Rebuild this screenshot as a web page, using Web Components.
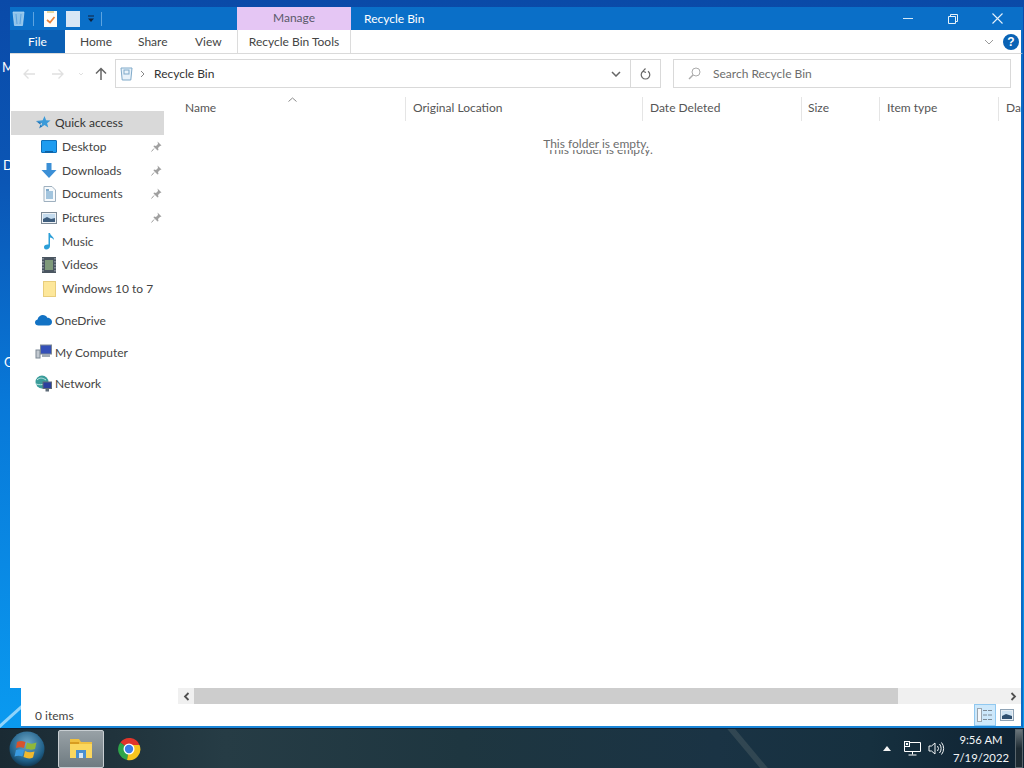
<!DOCTYPE html>
<html>
<head>
<meta charset="utf-8">
<title>Recycle Bin</title>
<style>
  html, body { margin: 0; padding: 0; width: 1024px; height: 768px; overflow: hidden; }
  body { font: 12px Lato, "Open Sans", sans-serif; color: #444; }
</style>
</head>
<body>
<win-desktop>
  <explorer-window>
    <title-bar slot="top"></title-bar>
    <ribbon-tabs slot="top"></ribbon-tabs>
    <address-row slot="top"></address-row>
    <nav-pane slot="left">
      <nav-item top selected label="Quick access" icon="star"></nav-item>
      <nav-item label="Desktop" icon="desktop" pinned></nav-item>
      <nav-item label="Downloads" icon="downloads" pinned></nav-item>
      <nav-item label="Documents" icon="documents" pinned></nav-item>
      <nav-item label="Pictures" icon="pictures" pinned></nav-item>
      <nav-item label="Music" icon="music"></nav-item>
      <nav-item label="Videos" icon="videos"></nav-item>
      <nav-item label="Windows 10 to 7" icon="folder"></nav-item>
      <nav-item top gap label="OneDrive" icon="onedrive"></nav-item>
      <nav-item top gap label="My Computer" icon="computer"></nav-item>
      <nav-item top gap label="Network" icon="network"></nav-item>
    </nav-pane>
    <file-list slot="main"></file-list>
    <h-scrollbar slot="scroll"></h-scrollbar>
    <status-bar slot="status"></status-bar>
  </explorer-window>
  <task-bar slot="bar"></task-bar>
</win-desktop>

<script>
const ICONS = {
  star: `<svg width="16" height="16" viewBox="0 0 16 16"><path d="M9.500 1l1.600 4.200 4.400.2-3.400 2.800 1.200 4.400-3.800-2.500-3.700 2.500L7 8.200 1 6l6.700-.7z" fill="#3a9ad9"/><path d="M1 6l5 1.500-1.800 6 3-2.300" fill="#2277bb"/></svg>`,
  desktop: `<svg width="16" height="14" viewBox="0 0 16 14"><rect x=".5" y=".5" width="15" height="12" rx=".5" fill="#1e9cf0" stroke="#0f6fb8"/><rect x="4" y="11" width="8" height="1.500" fill="#0f5f9f"/></svg>`,
  downloads: `<svg width="16" height="17" viewBox="0 0 16 17"><path d="M5.500 1h5v7H15.500L8 16 .5 8H5.500z" fill="#3b8fd6"/></svg>`,
  documents: `<svg width="13" height="16" viewBox="0 0 13 16"><path d="M1 .5h8l3.500 3.500v11.500H1z" fill="#f7fafc" stroke="#9fb0bf"/><path d="M3 6h7M3 8h7M3 10h7M3 12h7" stroke="#4f8fc0"/><rect x="3" y="3" width="3" height="2" fill="#7fa9c9"/></svg>`,
  pictures: `<svg width="16" height="12" viewBox="0 0 16 12"><rect x=".5" y=".5" width="15" height="11" fill="#eef2f6" stroke="#7d8a96"/><rect x="2" y="2" width="12" height="8" fill="#c4dbee"/><path d="M2 7l4-2 4 2 4-1v4H2z" fill="#3e5d7d"/></svg>`,
  music: `<svg width="12" height="18" viewBox="0 0 12 18"><path d="M5.500 1h1.500c.3 3 4 3.500 4 7-1-1.500-2.500-2.300-4-2.500V14c0 2-1.800 3.500-3.800 3.500C1.500 17.500 1 16 1 15c0-1.800 2-3 4.500-2.500z" fill="#2c9fd8"/></svg>`,
  videos: `<svg width="14" height="16" viewBox="0 0 14 16"><rect width="14" height="16" fill="#4a5560"/><rect x="3" y="3" width="8" height="10" fill="#7f9a7a"/><path d="M1 1v14M13 1v14" stroke="#b6bec6" stroke-dasharray="1.500 1.500"/></svg>`,
  folder: `<svg width="13" height="16" viewBox="0 0 13 16"><rect x=".5" y=".5" width="12" height="15" fill="#fde79a" stroke="#e8cd7c"/></svg>`,
  onedrive: `<svg width="17" height="12" viewBox="0 0 17 12"><path d="M3.500 11.500C1.500 11.500 0 10.200 0 8.500c0-1.500 1-2.700 2.500-3C3.200 2.600 5.500 1 7.800 1c2 0 3.700 1 4.500 2.800 2.500 0 4.700 1.800 4.700 4.200 0 2-1.500 3.500-3.500 3.500z" fill="#1272c4"/></svg>`,
  computer: `<svg width="17" height="16" viewBox="0 0 17 16"><rect x="5.500" y="1" width="11" height="9" fill="#3450b8" stroke="#7d8894"/><rect x="7" y="10" width="8" height="3" fill="#a0aab4"/><rect x="1" y="6" width="4" height="8" fill="#c2c9d0" stroke="#7d8894"/></svg>`,
  network: `<svg width="17" height="17" viewBox="0 0 17 17"><circle cx="7" cy="7" r="6.500" fill="#3a9c9a"/><path d="M2 5c3-3 6-2 9 0M1 9c3 1 6 1 8 0" stroke="#bfe6e2" fill="none"/><rect x="8" y="7" width="8.500" height="6.500" fill="#2a3f9e" stroke="#5f6b78"/><rect x="10.500" y="13.500" width="3.500" height="3" fill="#5f6b78"/></svg>`
}

function shadow(el, html) {
  el.attachShadow({ mode: 'open' }).innerHTML = html
}

class WinDesktop extends HTMLElement {
  connectedCallback() {
    shadow(this, `<style>
      :host { display: flex; flex-direction: column; width: 1024px; height: 768px; }
      .wall { position: relative; height: 728px; overflow: hidden;
        background: linear-gradient(180deg, #0a4aa8 0, #0b56b5 25%, #0878d8 55%, #0a9af0 100%); }
      .wall i { position: absolute; font: normal 13px Lato, sans-serif; color: #fff; }
      .streak { position: absolute; left: -6px; top: 712px; width: 40px; height: 3px; background: #8fd4fb; transform: rotate(-42deg); }
      .win { position: absolute; left: 10px; top: 7px; width: 1013px; height: 721px; }
    </style>
    <div class="wall">
      <i style="top:59px;left:2px">M</i>
      <i style="top:157px;left:3px">D</i>
      <i style="top:354px;left:4px">G</i>
      <div class="streak"></div>
      <div class="win"><slot></slot></div>
    </div>
    <slot name="bar"></slot>`)
  }
}

class ExplorerWindow extends HTMLElement {
  connectedCallback() {
    shadow(this, `<style>
      :host { display: flex; flex-direction: column; height: 100%; }
      .mid { display: flex; height: 591px; background: #fff; border-right: 2px solid #0b6bc4; }
      .left { width: 168px; flex: none; }
      .main { flex: 1; min-width: 0; position: relative; }
      .lower { margin-left: 11px; background: #fff; border-right: 2px solid #0b6bc4; border-bottom: 2px solid #1a86d8; flex: 1; display: flex; flex-direction: column; }
    </style>
    <slot name="top"></slot>
    <div class="mid">
      <div class="left"><slot name="left"></slot></div>
      <div class="main"><slot name="main"></slot></div>
    </div>
    <div class="lower">
      <slot name="scroll"></slot>
      <slot name="status"></slot>
    </div>`)
  }
}

class TitleBar extends HTMLElement {
  connectedCallback() {
    shadow(this, `<style>
      :host { display: flex; height: 23px; background: #0a6fc8; color: #fff; align-items: stretch; }
      .qat { width: 227px; display: flex; align-items: center; flex: none; }
      .sep { width: 1px; height: 14px; background: #5da4e0; }
      .manage { width: 114px; flex: none; background: #e5c6f4; color: #5a5a6a; display: flex; align-items: center; justify-content: center; padding-bottom: 2px; box-sizing: border-box; }
      .title { flex: 1; padding-left: 13px; display: flex; align-items: center; }
      .btns { display: flex; align-items: center; }
      .btns span { width: 45px; height: 23px; display: flex; align-items: center; justify-content: center; }
    </style>
    <div class="qat">
      <svg style="margin-left:2px" width="13" height="15" viewBox="0 0 13 15"><path d="M1 1h11l-1.500 13.500h-8z" fill="#8fc4ea" stroke="#b8dcf5" stroke-width=".7"/><path d="M4 3l1 10M9 3l-1 10" stroke="#5da4e0"/></svg>
      <span class="sep" style="margin-left:8px"></span>
      <svg style="margin-left:10px" width="13" height="16" viewBox="0 0 13 16"><rect width="13" height="16" fill="#fdfdf8"/><rect x="3" width="7" height="2" fill="#e8d9a0"/><path d="M3 9l3 2.500L10.500 6" stroke="#e8823a" stroke-width="1.700" fill="none"/></svg>
      <svg style="margin-left:9px" width="14" height="16" viewBox="0 0 14 16"><rect width="14" height="16" fill="#d8e6f5"/></svg>
      <svg style="margin-left:7px" width="8" height="8" viewBox="0 0 8 8"><path d="M1 1h6" stroke="#10233f"/><path d="M1 3.500h6L4 7z" fill="#10233f"/></svg>
      <span class="sep" style="margin-left:6px"></span>
    </div>
    <div class="manage">Manage</div>
    <div class="title">Recycle Bin</div>
    <div class="btns">
      <span><svg width="10" height="2"><rect width="10" height="1" fill="#d5e8f7"/></svg></span>
      <span><svg width="10" height="10" viewBox="0 0 10 10"><path d="M.5 2.500h7v7h-7zM2.500 2.500v-2h7v7h-2" fill="none" stroke="#e6f2fb"/></svg></span>
      <span style="margin-right:3px"><svg width="11" height="11" viewBox="0 0 11 11"><path d="M.5.500l10 10M10.500.500l-10 10" stroke="#e6f2fb" stroke-width="1.100"/></svg></span>
    </div>`)
  }
}

class RibbonTabs extends HTMLElement {
  connectedCallback() {
    shadow(this, `<style>
      :host { display: flex; height: 23px; background: #fff; border-bottom: 1px solid #dadada; color: #444; align-items: stretch; border-right: 2px solid #0b6bc4; }
      .file { width: 55px; background: #0b5fb4; color: #fff; display: flex; align-items: center; justify-content: center; }
      .tab { display: flex; align-items: center; padding-left: 15px; box-sizing: border-box; }
      .tools { width: 114px; border: solid #dcdcdc; border-width: 0 1px; display: flex; align-items: center; justify-content: center; box-sizing: border-box; }
      .end { margin-left: auto; display: flex; align-items: center; gap: 9px; padding-right: 2px; }
      .help { width: 16px; height: 16px; border-radius: 50%; background: #0a63b5; color: #fff; font: bold 12px "Liberation Sans", sans-serif; display: flex; align-items: center; justify-content: center; }
    </style>
    <div class="file">File</div>
    <div class="tab" style="width:58px">Home</div>
    <div class="tab" style="width:57px">Share</div>
    <div class="tab" style="width:57px">View</div>
    <div class="tools">Recycle Bin Tools</div>
    <div class="end">
      <svg width="10" height="6" viewBox="0 0 10 6"><path d="M1 1l4 4 4-4" stroke="#9a9a9a" fill="none"/></svg>
      <span class="help">?</span>
    </div>`)
  }
}

class AddressRow extends HTMLElement {
  connectedCallback() {
    shadow(this, `<style>
      :host { display: flex; height: 43px; background: #fff; box-sizing: border-box; padding: 5px 0 9px; border-right: 2px solid #0b6bc4; }
      .nav { width: 105px; flex: none; display: flex; align-items: center; }
      .box { border: 1px solid #d9d9d9; display: flex; align-items: center; box-sizing: border-box; }
      .box span { padding-bottom: 1px; }
      .addr { width: 546px; }
      .path { flex: 1; display: flex; align-items: center; color: #333; }
      .cell { display: flex; align-items: center; justify-content: center; height: 100%; }
      .search { width: 338px; margin-left: 12px; color: #6d6d6d; }
    </style>
    <div class="nav">
      <svg style="margin-left:12px" width="14" height="12" viewBox="0 0 14 12"><path d="M13 6H2M6.500 1.500L2 6l4.500 4.500" stroke="#e0e0e0" stroke-width="1.300" fill="none"/></svg>
      <svg style="margin-left:15px" width="14" height="12" viewBox="0 0 14 12"><path d="M1 6h11M7.500 1.500L12 6l-4.500 4.500" stroke="#e0e0e0" stroke-width="1.300" fill="none"/></svg>
      <svg style="margin-left:13px" width="6" height="4" viewBox="0 0 6 4"><path d="M1 1l2 2 2-2" stroke="#e0e0e0" fill="none"/></svg>
      <svg style="margin-left:11px" width="12" height="13" viewBox="0 0 12 13"><path d="M6 13V2M1 6.500L6 1.500l5 5" stroke="#666" stroke-width="1.500" fill="none"/></svg>
    </div>
    <div class="box addr">
      <div class="path">
        <svg style="margin-left:4px" width="13" height="14" viewBox="0 0 13 14"><path d="M1 1h11l-1.200 12H2.200z" fill="#e8f2fa" stroke="#7fa9c9"/><rect x="4" y="3" width="5" height="4" fill="none" stroke="#7fa9c9"/></svg>
        <svg style="margin-left:7px" width="5" height="8" viewBox="0 0 5 8"><path d="M1 1l3 3-3 3" stroke="#888" fill="none"/></svg>
        <span style="margin-left:9px">Recycle Bin</span>
      </div>
      <div class="cell" style="width:29px"><svg width="10" height="6" viewBox="0 0 10 6"><path d="M1 1l4 4 4-4" stroke="#666" stroke-width="1.500" fill="none"/></svg></div>
      <div class="cell" style="width:29px;border-left:1px solid #d9d9d9"><svg width="11" height="12" viewBox="0 0 11 12"><path d="M3 3.200a4.300 4.300 0 1 0 5 0M5.500 0.500l-2.500 2.700 3 1.300" stroke="#666" stroke-width="1.200" fill="none"/></svg></div>
    </div>
    <div class="box search">
      <svg style="margin-left:14px" width="13" height="13" viewBox="0 0 13 13"><circle cx="8" cy="5" r="4" fill="none" stroke="#aaa"/><path d="M5 8l-4 4" stroke="#aaa" stroke-width="1.400"/></svg>
      <span style="margin-left:12px">Search Recycle Bin</span>
    </div>`)
  }
}

class NavPane extends HTMLElement {
  connectedCallback() {
    shadow(this, `<style>
      :host { display: block; padding: 14px 0 0 1px; width: 153px; }
    </style><slot></slot>`)
  }
}

class NavItem extends HTMLElement {
  connectedCallback() {
    const top = this.hasAttribute('top')
    const pinned = this.hasAttribute('pinned')
    shadow(this, `<style>
      :host { display: flex; align-items: center; height: 23.7px; color: #444; box-sizing: border-box; }
      :host([gap]) { margin-top: 8px; }
      :host([selected]) { background: #d9d9d9; color: #333; }
      .ic { width: 20px; flex: none; display: flex; justify-content: center; align-items: center; margin-left: ${top ? 22 : 28}px; margin-right: ${top ? 2 : 3}px; }
      .pin { margin-left: auto; margin-right: 2px; }
    </style>
    <span class="ic">${ICONS[this.getAttribute('icon')]}</span>
    <span>${this.getAttribute('label')}</span>
    ${pinned ? `<svg class="pin" width="11" height="11" viewBox="0 0 11 11"><path d="M6.500.500l4 4-1.500.500-2 2 .500 2-1 .500-4-4 .500-1 2 .500 2-2z" fill="#a0a0a0"/><path d="M3 7.500L.500 10.500" stroke="#a0a0a0"/></svg>` : ''}`)
  }
}

class ColumnHeader extends HTMLElement {
  connectedCallback() {
    shadow(this, `<style>
      :host { display: flex; align-items: center; box-sizing: border-box; flex: none; height: 24px; padding: 0 0 3px 7px; border-left: 1px solid #e5e5e5; color: #555; white-space: nowrap; }
    </style><slot></slot>`)
  }
}

class FileList extends HTMLElement {
  connectedCallback() {
    shadow(this, `<style>
      :host { display: block; position: relative; height: 100%; overflow: hidden; }
      .head { display: flex; }
      .sort { position: absolute; left: 110px; top: 0; }
      .empty { text-align: center; margin: 15px 0 0 -2px; color: #6d6d6d; width: 840px; position: relative; }
      .ghost { position: absolute; left: 8px; right: 0; top: 6px; clip-path: inset(8px 0 0 0); }
    </style>
    <div class="head">
      <column-header style="width:227px;border-left:0">Name</column-header>
      <column-header style="width:237px">Original Location</column-header>
      <column-header style="width:159px">Date Deleted</column-header>
      <column-header style="width:78px;padding-left:6px">Size</column-header>
      <column-header style="width:119px">Item type</column-header>
      <column-header style="width:23px">Dat</column-header>
    </div>
    <svg class="sort" width="9" height="5" viewBox="0 0 9 5"><path d="M.5 4.500l4-3.500 4 3.500" stroke="#8a8a8a" fill="none"/></svg>
    <div class="empty">This folder is empty.<div class="ghost">This folder is empty.</div></div>`)
  }
}

class HScrollbar extends HTMLElement {
  connectedCallback() {
    shadow(this, `<style>
      :host { display: flex; height: 16px; margin-left: 157px; background: #f0f0f0; align-items: stretch; }
      .arr { width: 16px; flex: none; display: flex; align-items: center; justify-content: center; }
      .thumb { width: 704px; flex: none; background: #cdcdcd; }
      .end { margin-left: auto; }
    </style>
    <div class="arr"><svg width="7" height="9" viewBox="0 0 7 9"><path d="M5.500 1l-3.500 3.500 3.500 3.500" stroke="#505050" stroke-width="1.800" fill="none"/></svg></div>
    <div class="thumb"></div>
    <div class="arr end"><svg width="7" height="9" viewBox="0 0 7 9"><path d="M1.500 1l3.500 3.500L1.500 8" stroke="#505050" stroke-width="1.800" fill="none"/></svg></div>`)
  }
}

class StatusBar extends HTMLElement {
  connectedCallback() {
    shadow(this, `<style>
      :host { display: flex; flex: 1; align-items: center; padding-left: 14px; color: #444; }
      .views { margin-left: auto; display: flex; align-items: center; height: 100%; margin-right: 3px; }
      .on { width: 22px; height: 22px; box-sizing: border-box; background: #cde8fb; border: 1px solid #90c8f0; display: flex; align-items: center; justify-content: center; }
      .off { width: 22px; display: flex; justify-content: center; }
    </style>
    <span>0 items</span>
    <div class="views">
      <div class="on"><svg width="16" height="14" viewBox="0 0 16 14"><rect x=".5" y=".5" width="4" height="13" fill="#f4f7fa" stroke="#9aa5af"/><path d="M6 2.500h4M11 2.500h4M6 7h4M11 7h4M6 11.500h4M11 11.500h4" stroke="#7d8a96"/></svg></div>
      <div class="off"><svg width="14" height="12" viewBox="0 0 14 12"><rect x=".5" y=".5" width="13" height="11" fill="#e8eef4" stroke="#8fa3b5"/><rect x="2" y="2" width="10" height="8" fill="#cfe2f1"/><path d="M2 7l4-2 6 2v3H2z" fill="#2f4f6f"/></svg></div>
    </div>`)
  }
}

class TaskBar extends HTMLElement {
  connectedCallback() {
    shadow(this, `<style>
      :host { display: flex; align-items: center; height: 40px; box-sizing: border-box; border-top: 1px solid #0c2036; position: relative; overflow: hidden;
        background: linear-gradient(90deg, #1a2a33 0, #263c45 22%, #1e3640 45%, #1a3344 70%, #16303f 85%, #0f2232 100%); color: #f2f5f6; font: 11.3px Lato, sans-serif; }
      .start { margin-left: 9px; width: 36px; height: 36px; flex: none; }
      .app { width: 46px; height: 38px; margin-left: 13px; box-sizing: border-box; border: 1px solid #c8ced2; border-radius: 2px; flex: none;
        background: linear-gradient(180deg, #98a1a6, #6f7b81); display: flex; align-items: center; justify-content: center; }
      .chrome { margin-left: 13px; width: 24px; height: 24px; flex: none; }
      .tray { margin-left: auto; display: flex; align-items: center; height: 100%; }
      .clock { margin-left: 7px; text-align: center; line-height: 18px; width: 58px; }
      .show { margin: 0 1px 0 5px; width: 8px; height: 100%; box-sizing: border-box; border: 1px solid #59656c; background: linear-gradient(180deg, #6a757b, #1d2a32 50%); }
      .streak { position: absolute; left: 745px; top: -10px; width: 6px; height: 60px; background: rgba(200,200,180,.14); transform: rotate(-40deg); }
    </style>
    <div class="streak"></div>
    <svg class="start" viewBox="0 0 36 36">
      <defs><radialGradient id="g" cx=".5" cy=".35" r=".7"><stop offset="0" stop-color="#6fa9c9"/><stop offset=".7" stop-color="#1f5f88"/><stop offset="1" stop-color="#0d2b40"/></radialGradient></defs>
      <circle cx="18" cy="18" r="17.500" fill="url(#g)"/>
      <path d="M8 11c3-1.500 5-1.500 8.500 0l-1.500 6c-3-1-5-1-8 0z" fill="#d8532c"/>
      <path d="M18 11.500c3 1.500 6 1.500 9.500 0L26 18c-3 1-5.500 1-9.500-.5z" fill="#8fb83a"/>
      <path d="M7 19c3-1 5-1 8 0l-1.500 6.500c-3-1-5-1-8 0z" fill="#3a9ae0"/>
      <path d="M16 20c3 1.500 6 1.500 9.500.5L24 26.500c-3 1.500-6 1-9.500-.5z" fill="#f0b92e"/>
    </svg>
    <div class="app">
      <svg width="24" height="21" viewBox="0 0 24 21"><path d="M1 1h9l2 3h11v16H1z" fill="#f0c040"/><rect x="1" y="6" width="22" height="14" fill="#fbd75e"/><rect x="1" y="4" width="9" height="2" fill="#d89c20"/><rect x="7" y="12" width="10" height="8" fill="#4a8fd0"/><rect x="10" y="15" width="4" height="5" fill="#d9e6f2"/></svg>
    </div>
    <svg class="chrome" viewBox="0 0 24 24">
      <path d="M12 12L3.400 5.500A11 11 0 0 1 22.500 8H12z" fill="#e0352b"/>
      <path d="M12 12L3.400 5.500A11 11 0 0 0 10 23z" fill="#2fa54a"/>
      <path d="M12 12l-2 11A11 11 0 0 0 22.500 8H12z" fill="#f7c51e"/>
      <circle cx="12" cy="12" r="5.500" fill="#fff"/>
      <circle cx="12" cy="12" r="4.200" fill="#3a7de8"/>
    </svg>
    <div class="tray">
      <svg width="8" height="5" viewBox="0 0 8 5"><path d="M4 0l4 5H0z" fill="#f4f4f4"/></svg>
      <svg style="margin-left:13px" width="17" height="15" viewBox="0 0 17 15"><path d="M4.500 1.500h12v9h-16v-9h4M8.500 10.500v3M4.500 14h8" fill="none" stroke="#fff"/><rect x=".5" y=".5" width="5" height="5" fill="#26404f" stroke="#fff"/><rect x="2" y="2" width="2" height="2" fill="#fff"/></svg>
      <svg style="margin-left:7px" width="17" height="15" viewBox="0 0 17 15"><path d="M1 5h2.500L7 2v11L3.500 10H1z" fill="none" stroke="#f2f5f6"/><path d="M9.500 5a4 4 0 0 1 0 5M11.500 3a7 7 0 0 1 0 9M13.500 1.500a9.500 9.500 0 0 1 0 12" fill="none" stroke="#f2f5f6"/></svg>
      <div class="clock"><div>9:56 AM</div><div>7/19/2022</div></div>
      <div class="show"></div>
    </div>`)
  }
}

customElements.define('win-desktop', WinDesktop)
customElements.define('explorer-window', ExplorerWindow)
customElements.define('title-bar', TitleBar)
customElements.define('ribbon-tabs', RibbonTabs)
customElements.define('address-row', AddressRow)
customElements.define('nav-pane', NavPane)
customElements.define('nav-item', NavItem)
customElements.define('column-header', ColumnHeader)
customElements.define('file-list', FileList)
customElements.define('h-scrollbar', HScrollbar)
customElements.define('status-bar', StatusBar)
customElements.define('task-bar', TaskBar)
</script>
</body>
</html>
